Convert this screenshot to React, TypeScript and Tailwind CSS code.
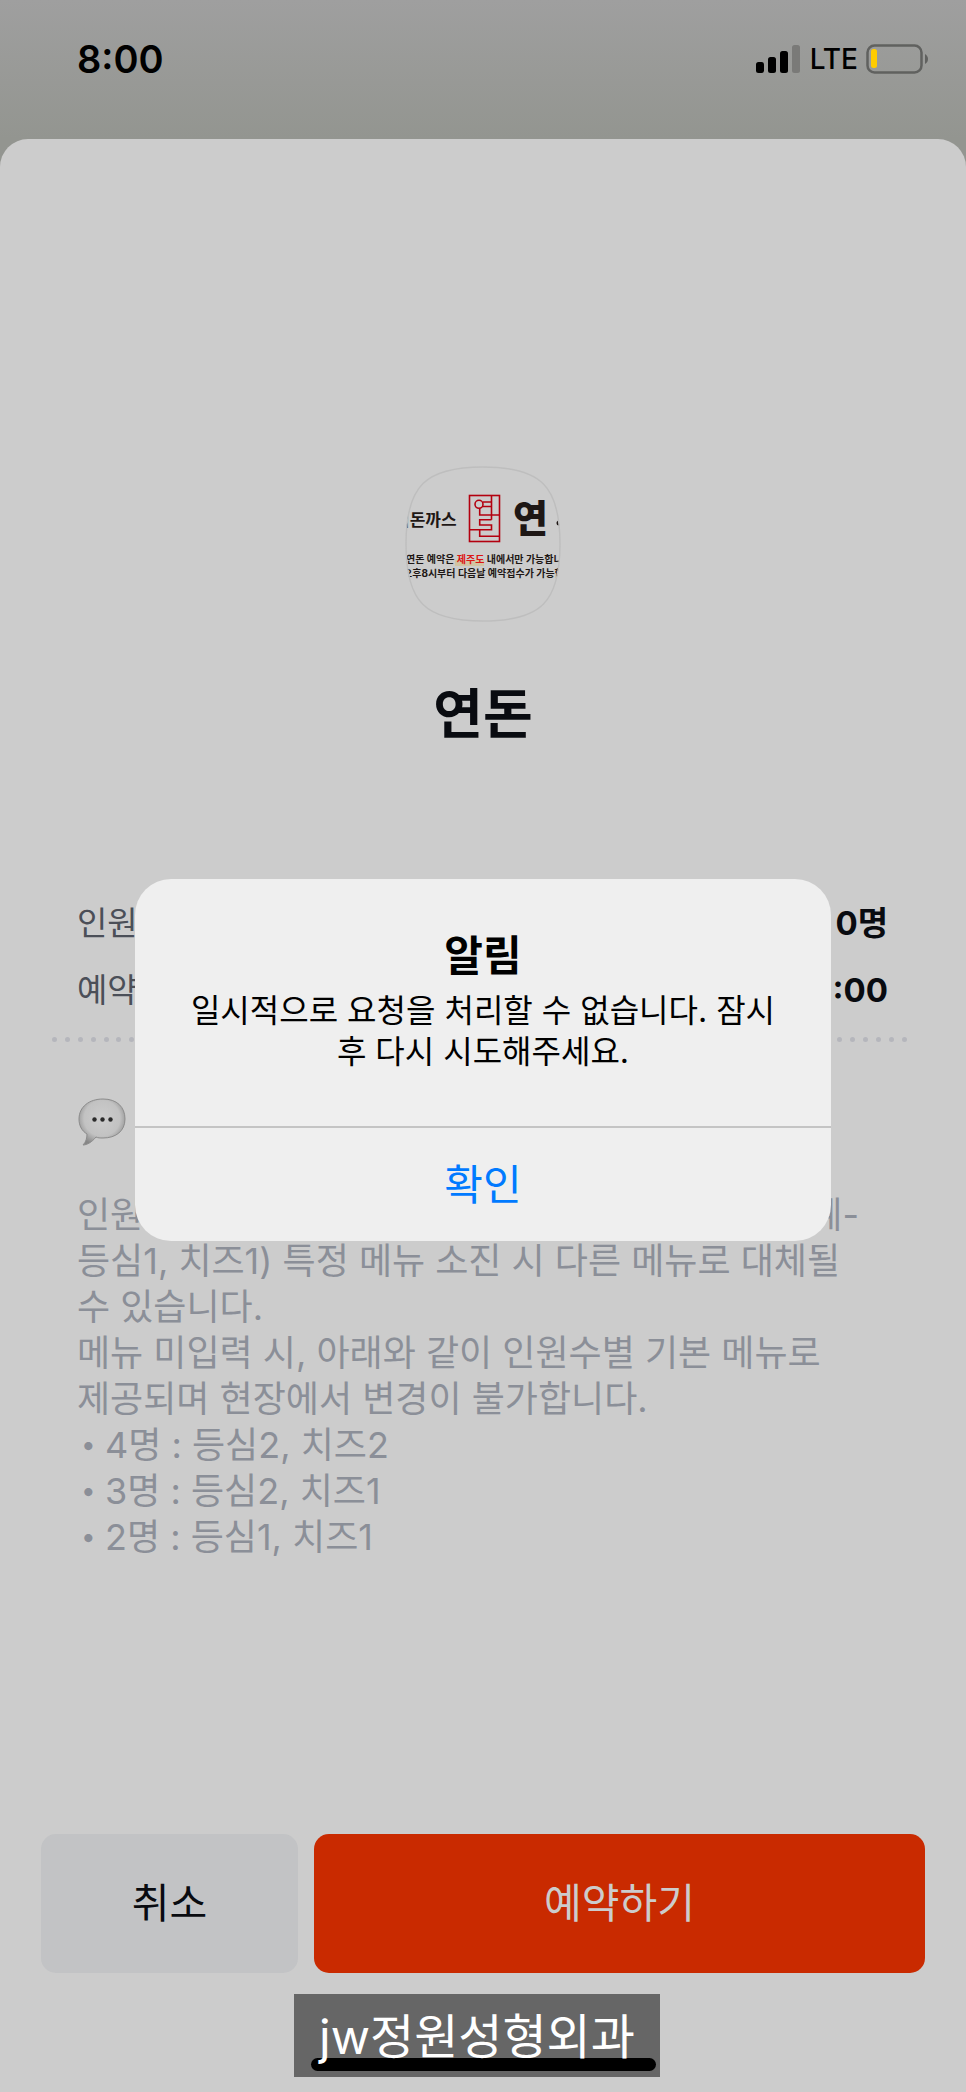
const fontStack = "font-['Inter','Noto_Sans_CJK_KR',sans-serif]";

const menuDefaults = ["4명 : 등심2, 치즈2", "3명 : 등심2, 치즈1", "2명 : 등심1, 치즈1"];

function StatusBar() {
  return (
    <header className="flex h-[139px] items-start justify-between bg-linear-to-b from-[#9f9f9f] to-[#939590] pt-[39px] pr-[36px] pl-[77px]">
      <time className="text-[38px] leading-[40px] font-semibold text-black">8:00</time>
      <div className="flex h-10 items-center gap-2">
        <svg width="46" height="28" viewBox="0 0 46 28" aria-label="signal">
          <rect x="0" y="17" width="8" height="11" rx="2.5" />
          <rect x="12" y="12" width="8" height="16" rx="2.5" />
          <rect x="24" y="6" width="8" height="22" rx="2.5" />
          <rect x="36" y="0" width="8" height="28" rx="2.5" fill="#7a7a78" />
        </svg>
        <span className="text-[28px] leading-[40px] font-medium text-black">LTE</span>
        <svg width="64" height="30" viewBox="0 0 64 30" aria-label="battery">
          <rect x="1.5" y="1.5" width="54" height="27" rx="7" fill="none" stroke="#60615f" strokeWidth="2.5" />
          <rect x="5" y="5" width="6" height="19" rx="2.5" fill="#ffcc00" />
          <path d="M59 10 C63 12 63 18 59 20 Z" fill="#60615f" />
        </svg>
      </div>
    </header>
  );
}

function StoreLogo() {
  return (
    <svg width="156" height="156" viewBox="0 0 156 156" className="mx-auto" aria-label="연돈">
      <defs>
        <clipPath id="squircle">
          <path d="M78 1C20 1 1 20 1 78C1 136 20 155 78 155C136 155 155 136 155 78C155 20 136 1 78 1Z" />
        </clipPath>
      </defs>
      <g clipPath="url(#squircle)" fill="#1e1715">
        <text x="-11" y="60" fontSize="17" fontWeight="700">비돈까스</text>
        <g fill="none" stroke="#b3000f" strokeWidth="1.6">
          <rect x="64.5" y="29.5" width="30" height="46" />
          <circle cx="74" cy="38.3" r="4" />
          <path d="M78 36H86.5M78 40.5H86.5M86.5 29.5V53.7M74.7 42.3V49H94.5M86.5 53.7H74.7V59H86.5V63.7H74.7V70.3H94.5M64.5 63.7H74.7" />
        </g>
        <text x="108" y="66" fontSize="38" fontWeight="900">연</text>
        <circle cx="154" cy="57" r="2.5" />
        <rect x="50" y="94" width="29" height="6" fill="#d2c4a2" />
        <text x="1" y="97" fontSize="10" fontWeight="700">
          연돈 예약은 <tspan fill="#dc1414">제주도</tspan> 내에서만 가능합니다
        </text>
        <text x="-2" y="111" fontSize="10" fontWeight="700">오후8시부터 다음날 예약접수가 가능합니다</text>
      </g>
      <path
        d="M78 1C20 1 1 20 1 78C1 136 20 155 78 155C136 155 155 136 155 78C155 20 136 1 78 1Z"
        fill="none"
        stroke="#bebebe"
        strokeWidth="1.4"
      />
    </svg>
  );
}

function SpeechBubble() {
  return (
    <svg width="48" height="48" viewBox="0 0 48 48" className="mt-[56px] ml-[78px]" aria-hidden="true">
      <defs>
        <radialGradient id="bubble" cx="0.5" cy="0.42" r="0.6">
          <stop offset="0" stopColor="#cdcdcd" />
          <stop offset="0.65" stopColor="#c2c2c2" />
          <stop offset="1" stopColor="#868686" />
        </radialGradient>
      </defs>
      <path
        d="M25 1C39 1 47 9 47 21C47 33 38 40 25 40C22 40 20 40 18 39C14 44 9 47 5 47C8 44 9 40 9 36C4 33 1 28 1 21C1 9 11 1 25 1Z"
        fill="url(#bubble)"
        stroke="#8c8c8c"
        strokeWidth="1"
      />
      <circle cx="16.5" cy="21.5" r="2.2" fill="#2b2b2b" />
      <circle cx="24.5" cy="21.5" r="2.2" fill="#2b2b2b" />
      <circle cx="32.5" cy="21.5" r="2.2" fill="#2b2b2b" />
    </svg>
  );
}

function DottedDivider() {
  return (
    <div className="mt-[13px] flex justify-between pr-[59px] pl-[52px]">
      {Array.from({ length: 67 }, (_, i) => (
        <span key={i} className="size-[5px] rounded-full bg-[#b5b6bc]" />
      ))}
    </div>
  );
}

function AlertDialog() {
  return (
    <div className="absolute inset-0 flex items-center justify-center pt-[27px]">
      <div
        role="alertdialog"
        aria-labelledby="alert-title"
        aria-describedby="alert-message"
        className="w-[72%] overflow-hidden rounded-[36px] bg-[#efefef] text-center text-black"
      >
        <div className="px-10 pt-[47px] pb-[54px]">
          <h2 id="alert-title" className="text-[42px] leading-[60px] font-bold">알림</h2>
          <p id="alert-message" className="mt-1 text-[32px] leading-[41px]">
            일시적으로 요청을 처리할 수 없습니다. 잠시
            <br />
            후 다시 시도해주세요.
          </p>
        </div>
        <button type="button" className="h-[115px] w-full border-t-2 border-[#c4c4c4] text-[42px] text-[#007aff]">
          확인
        </button>
      </div>
    </div>
  );
}

export default function App() {
  return (
    <div lang="ko" className={`relative flex min-h-screen flex-col bg-[#939590] ${fontStack}`}>
      <StatusBar />
      <main className="flex flex-1 flex-col rounded-t-[28px] bg-[#cccccc] pt-[327px] pb-[15px]">
        <StoreLogo />
        <h1 className="mt-[63px] text-center text-[54px] leading-[60px] font-bold text-[#090b10]">연돈</h1>

        <dl className="mt-[145px] pr-[78px] pl-[77px] text-[33px] leading-[67px]">
          <div className="flex justify-between">
            <dt className="text-[#4b4f58]">인원</dt>
            <dd className="font-bold text-[#090b10]">0명</dd>
          </div>
          <div className="flex justify-between">
            <dt className="text-[#4b4f58]">예약</dt>
            <dd className="font-bold text-[#090b10]">:00</dd>
          </div>
        </dl>

        <DottedDivider />
        <SpeechBubble />

        <div className="mt-[46px] pr-[107px] pl-[77px] text-[36px] leading-[46px] text-[#8b8f98]">
          <p className="flex justify-between">
            <span>인원</span>
            <span>예-</span>
          </p>
          <p className="whitespace-nowrap">
            등심1, 치즈1) 특정 메뉴 소진 시 다른 메뉴로 대체될
            <br />
            수 있습니다.
            <br />
            메뉴 미입력 시, 아래와 같이 인원수별 기본 메뉴로
            <br />
            제공되며 현장에서 변경이 불가합니다.
          </p>
          <ul>
            {menuDefaults.map((item) => (
              <li key={item} className="flex">
                <span className="w-7 pl-1 text-[26px]">•</span>
                {item}
              </li>
            ))}
          </ul>
        </div>

        <div className="mt-auto flex gap-4 px-[41px] text-[41px]">
          <button type="button" className="h-[139px] w-[257px] rounded-[15px] bg-[#c2c3c5] text-[#090b10]">
            취소
          </button>
          <button type="button" className="h-[139px] flex-1 rounded-[15px] bg-[#c92a00] text-[#cccccc]">
            예약하기
          </button>
        </div>

        <div className="mt-[21px] flex justify-center pr-3">
          <div className="relative h-[83px] w-[366px] bg-[#666666]">
            <div className="absolute right-[4px] bottom-[6px] left-[17px] h-[13px] rounded-full bg-black" />
            <p className="relative text-center text-[48px] leading-[86px] whitespace-nowrap text-white">jw정원성형외과</p>
          </div>
        </div>
      </main>

      <AlertDialog />
    </div>
  );
}
